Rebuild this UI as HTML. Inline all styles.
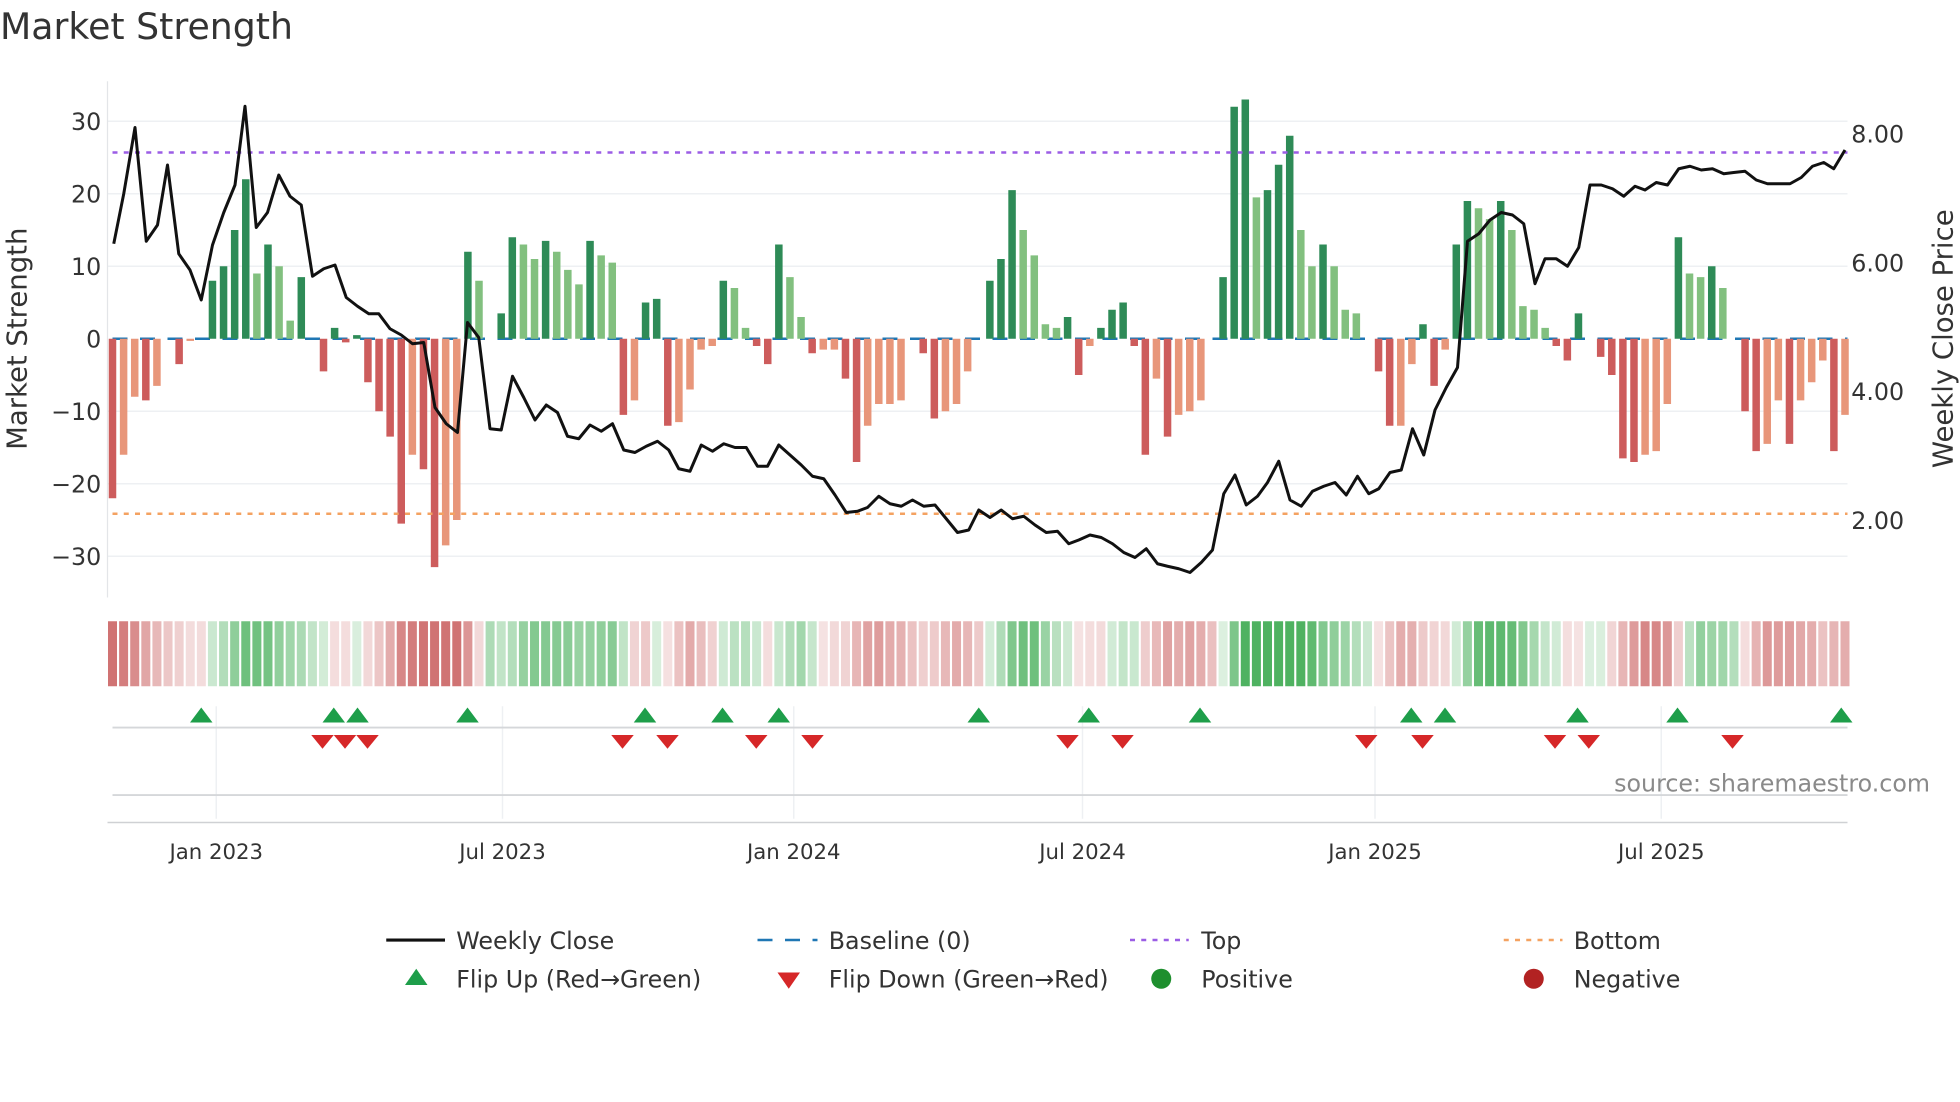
<!DOCTYPE html>
<html><head><meta charset="utf-8"><style>
html,body{margin:0;padding:0;background:#fff;}
svg{display:block;font-family:"DejaVu Sans","Liberation Sans",sans-serif;}
</style></head><body>
<svg id="s" width="1960" height="1102" viewBox="0 0 1568 881.6" xmlns="http://www.w3.org/2000/svg">
<rect width="1568" height="882" fill="#fff"/>
<text x="0" y="31" font-size="29" fill="#333">Market Strength</text>
<g stroke="#eef0f3" stroke-width="1.2">
<line x1="86" y1="97" x2="1478" y2="97"/><line x1="86" y1="155" x2="1478" y2="155"/>
<line x1="86" y1="213" x2="1478" y2="213"/><line x1="86" y1="329" x2="1478" y2="329"/>
<line x1="86" y1="387" x2="1478" y2="387"/><line x1="86" y1="445" x2="1478" y2="445"/>
</g>
<line x1="86" y1="65" x2="86" y2="478" stroke="#e3e5e8" stroke-width="1"/>
<g font-size="19" fill="#333" text-anchor="end">
<text x="81" y="104">30</text><text x="81" y="162">20</text><text x="81" y="220">10</text>
<text x="81" y="278">0</text><text x="81" y="336">−10</text><text x="81" y="394">−20</text><text x="81" y="452">−30</text>
</g>
<g font-size="19" fill="#333">
<text x="1481" y="114">8.00</text><text x="1481" y="217">6.00</text><text x="1481" y="320">4.00</text><text x="1481" y="423">2.00</text>
</g>
<text transform="translate(21,271) rotate(-90)" font-size="22" fill="#333" text-anchor="middle">Market Strength</text>
<text transform="translate(1562,271) rotate(-90)" font-size="22" fill="#333" text-anchor="middle">Weekly Close Price</text>
<line x1="90" y1="271" x2="1478" y2="271" stroke="#1f77b4" stroke-width="2" stroke-dasharray="12 10"/>
<g id="bars"></g>
<line x1="90" y1="122" x2="1478" y2="122" stroke="#9b5de5" stroke-width="2" stroke-dasharray="4 5"/>
<line x1="90" y1="411" x2="1478" y2="411" stroke="#f4a261" stroke-width="2" stroke-dasharray="4 5"/>
<polyline id="price" fill="none" stroke="#111" stroke-width="2.4" stroke-linejoin="round"/>
<g id="strip"></g>
<g stroke="#eef0f3" stroke-width="1.2">
<line x1="173" y1="565" x2="173" y2="655"/><line x1="402" y1="565" x2="402" y2="655"/>
<line x1="635" y1="565" x2="635" y2="655"/><line x1="866" y1="565" x2="866" y2="655"/>
<line x1="1100" y1="565" x2="1100" y2="655"/><line x1="1329" y1="565" x2="1329" y2="655"/>
</g>
<line x1="90" y1="582" x2="1478" y2="582" stroke="#d5d7da" stroke-width="1.5"/>
<line x1="90" y1="636" x2="1478" y2="636" stroke="#d5d7da" stroke-width="1.5"/>
<line x1="86" y1="658" x2="1478" y2="658" stroke="#cfd1d4" stroke-width="1.2"/>
<g id="marks"></g>
<text x="1544" y="633" font-size="19" fill="#8a8a8a" text-anchor="end">source: sharemaestro.com</text>
<g font-size="17" fill="#333" text-anchor="middle">
<text x="173" y="687">Jan 2023</text><text x="402" y="687">Jul 2023</text><text x="635" y="687">Jan 2024</text>
<text x="866" y="687">Jul 2024</text><text x="1100" y="687">Jan 2025</text><text x="1329" y="687">Jul 2025</text>
</g>
<g font-size="19" fill="#333">
<line x1="309" y1="752" x2="356" y2="752" stroke="#111" stroke-width="2.5"/><text x="365" y="759">Weekly Close</text>
<line x1="606" y1="752" x2="654" y2="752" stroke="#1f77b4" stroke-width="2" stroke-dasharray="12 10"/><text x="663" y="759">Baseline (0)</text>
<line x1="904" y1="752" x2="951" y2="752" stroke="#9b5de5" stroke-width="2" stroke-dasharray="4 5"/><text x="961" y="759">Top</text>
<line x1="1203" y1="752" x2="1250" y2="752" stroke="#f4a261" stroke-width="2" stroke-dasharray="4 5"/><text x="1259" y="759">Bottom</text>
<polygon points="333,775 342,788 324,788" fill="#1e9e4a"/><text x="365" y="790">Flip Up (Red→Green)</text>
<polygon points="622,778 640,778 631,791" fill="#d62728"/><text x="663" y="790">Flip Down (Green→Red)</text>
<circle cx="929" cy="783" r="8" fill="#1e8f2e"/><text x="961" y="790">Positive</text>
<circle cx="1227" cy="783" r="8" fill="#b22222"/><text x="1259" y="790">Negative</text>
</g>
</svg>
<script>
var v=[-22,-16,-8,-8.5,-6.5,0,-3.5,-0.3,0,8,10,15,22,9,13,10,2.5,8.5,0,-4.5,1.5,-0.5,0.5,-6,-10,-13.5,-25.5,-16,-18,-31.5,-28.5,-25,12,8,0,3.5,14,13,11,13.5,12,9.5,7.5,13.5,11.5,10.5,-10.5,-8.5,5,5.5,-12,-11.5,-7,-1.5,-1,8,7,1.5,-1,-3.5,13,8.5,3,-2,-1.5,-1.5,-5.5,-17,-12,-9,-9,-8.5,0,-2,-11,-10,-9,-4.5,0,8,11,20.5,15,11.5,2,1.5,3,-5,-1,1.5,4,5,-1,-16,-5.5,-13.5,-10.5,-10,-8.5,0,8.5,32,33,19.5,20.5,24,28,15,10,13,10,4,3.5,0,-4.5,-12,-12,-3.5,2,-6.5,-1.5,13,19,18,16.5,19,15,4.5,4,1.5,-1,-3,3.5,0,-2.5,-5,-16.5,-17,-16,-15.5,-9,14,9,8.5,10,7,0,-10,-15.5,-14.5,-8.5,-14.5,-8.5,-6,-3,-15.5,-10.5];
var NS="http://www.w3.org/2000/svg";
function el(t,a,p){var e=document.createElementNS(NS,t);for(var k in a)e.setAttribute(k,a[k]);p.appendChild(e);return e;}
var bars=document.getElementById('bars'),strip=document.getElementById('strip');
var step=(1476-90)/156;
for(var i=0;i<v.length;i++){var x=90+step*i,val=v[i],p=i?v[i-1]:0;
 if(Math.abs(val)>0.2){var h=Math.abs(val)*5.8;var c;
  if(val>0)c=(val>=p)?'#2e8b57':'#82c07f';else c=(val<p)?'#cd5c5c':'#e8967a';
  el('rect',{x:x-3,y:val>0?271-h:271,width:6,height:h,fill:c},bars);}
 var s=(v[i]+(i?v[i-1]:v[i])+(i>1?v[i-2]:v[i]))/3;var a=Math.min(1,0.2+Math.abs(s)/25);
 var col=s>=0?'rgba(60,170,80,'+a*0.9+')':'rgba(200,90,90,'+a*0.85+')';
 el('rect',{x:x-3.6,y:497,width:7.2,height:52,fill:col},strip);}
var pr=[91,195,99,155,108,102,117,193,126,180,134,132,143,203,152,216,161,240,170,196,179,170,188,148,196,85,205,182,214,170,223,140,232,157,241,164,250,221,259,215,268,212,277,238,286,245,295,251,303,251,312,263,321,268,330,275,339,274,348,326,357,339,366,346,374,258,383,270,392,343,401,344,410,301,419,318,428,336,437,324,446,330,454,349,463,351,472,340,481,345,490,339,499,360,508,362,517,357,526,353,535,360,543,375,552,377,561,356,570,361,579,355,588,358,597,358,606,373,614,373,623,356,632,364,641,372,650,381,659,383,668,396,677,410,686,409,694,406,703,397,712,403,721,405,730,400,739,405,748,404,757,415,766,426,775,424,783,408,792,414,801,408,810,415,819,413,828,420,837,426,846,425,855,435,863,432,872,428,881,430,890,435,899,442,908,446,917,439,926,451,934,453,943,455,952,458,961,450,970,440,979,395,988,380,997,404,1006,397,1014,386,1023,369,1032,400,1041,405,1050,393,1059,389,1068,386,1077,396,1086,381,1095,395,1103,391,1112,378,1121,376,1130,343,1139,364,1148,328,1157,310,1166,294,1174,193,1183,187,1192,176,1201,170,1210,172,1219,179,1228,227,1236,207,1245,207,1254,213,1263,198,1272,148,1281,148,1290,151,1299,157,1308,149,1316,152,1325,146,1334,148,1343,135,1352,133,1361,136,1370,135,1379,139,1387,138,1396,137,1405,144,1414,147,1423,147,1432,147,1441,142,1450,133,1459,130,1467,135,1476,120];
var pts=[];for(var j=0;j<pr.length;j+=2)pts.push(pr[j]+','+pr[j+1]);
document.getElementById('price').setAttribute('points',pts.join(' '));
var m=document.getElementById('marks');
[161,267,286,374,516,578,623,783,871,960,1129,1156,1262,1342,1473].forEach(function(x){el('polygon',{points:(x)+',566 '+(x+9)+',578 '+(x-9)+',578',fill:'#1e9e4a'},m);});
[258,276,294,498,534,605,650,854,898,1093,1138,1244,1271,1386].forEach(function(x){el('polygon',{points:(x-9)+',588 '+(x+9)+',588 '+x+',599',fill:'#d62728'},m);});
</script>
</body></html>
